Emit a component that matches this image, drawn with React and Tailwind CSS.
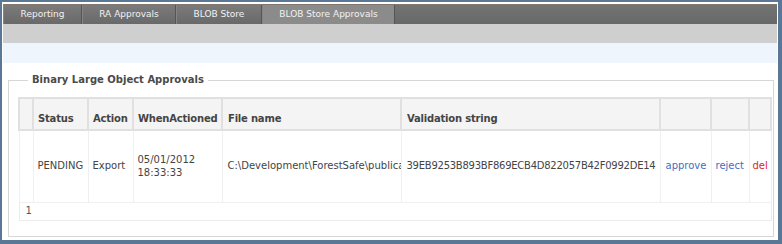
const tabs = [
  { label: "Reporting", w: "w-[79px]" },
  { label: "RA Approvals", w: "w-[94px]" },
  { label: "BLOB Store", w: "w-[86px]" },
  { label: "BLOB Store Approvals", w: "w-[133px]", active: true },
];

const rows = [
  {
    status: "PENDING",
    action: "Export",
    date: "05/01/2012",
    time: "18:33:33",
    file: "C:\\Development\\ForestSafe\\publicaccess\\blobs\\export.dat",
    hash: "39EB9253B893BF869ECB4D822057B42F0992DE14",
  },
];

export default function App() {
  return (
    <div className="w-[782px] h-[244px] overflow-hidden border-l-2 border-t-2 border-r-4 border-b-4 border-[#5a7896] bg-white font-['DejaVu_Sans',sans-serif]">
      <div className="mx-px mt-[2px]">
        {/* tab strip */}
        <div className="flex h-[20px] bg-[#6e6f6f] border-t border-[#80776f]">
          {tabs.map((t) => (
            <div
              key={t.label}
              className={`${t.w} flex items-center justify-center border-r border-[#555555] border-l border-l-[#858585] text-[9px] text-[#f2f2f2] ${
                t.active
                  ? "bg-[#8b8b8b]"
                  : "bg-gradient-to-b from-[#7b7b7b] to-[#696969]"
              }`}
            >
              {t.label}
            </div>
          ))}
          <div className="flex-1 bg-gradient-to-b from-[#727373] to-[#676868]"></div>
        </div>
        <div className="h-[19px] bg-[#cfcfcf]"></div>
        <div className="h-[20px] bg-[#eef5fd]"></div>
      </div>

      <fieldset className="ml-[6px] mr-[4px] mt-[11px] h-[163px] border border-[#d6d6d6] pl-[9px] pt-[11px]">
        <legend className="ml-[10px] px-[4px] text-[10px] leading-[12px] font-bold text-[#4a4a4a]">
          Binary Large Object Approvals
        </legend>
        <table className="w-[752px] table-fixed border-collapse text-[10px] leading-[12px] text-[#444444]">
          <colgroup>
            <col className="w-[14px]" />
            <col className="w-[55px]" />
            <col className="w-[45px]" />
            <col className="w-[89px]" />
            <col className="w-[179px]" />
            <col className="w-[259px]" />
            <col className="w-[51px]" />
            <col className="w-[38px]" />
            <col className="w-[22px]" />
          </colgroup>
          <thead>
            <tr className="h-[32px] bg-[#f4f4f4] text-left align-bottom tracking-[-0.2px]">
              <th className="border-2 border-[#e0e0e0]"></th>
              <th className="border-2 border-[#e0e0e0] pl-[4px] pb-[4px] font-bold">Status</th>
              <th className="border-2 border-[#e0e0e0] pl-[4px] pb-[4px] font-bold">Action</th>
              <th className="border-2 border-[#e0e0e0] pl-[4px] pb-[4px] font-bold">WhenActioned</th>
              <th className="border-2 border-[#e0e0e0] pl-[5px] pb-[4px] font-bold">File name</th>
              <th className="border-2 border-[#e0e0e0] pl-[5px] pb-[4px] font-bold">Validation string</th>
              <th className="border-2 border-[#e0e0e0]"></th>
              <th className="border-2 border-[#e0e0e0]"></th>
              <th className="border-2 border-[#e0e0e0]"></th>
            </tr>
          </thead>
          <tbody>
            {rows.map((r) => (
              <tr key={r.hash} className="h-[72px] align-middle">
                <td className="border border-[#f0f0f0]"></td>
                <td className="border border-[#f0f0f0] pl-[4px]">{r.status}</td>
                <td className="border border-[#f0f0f0] pl-[4px]">{r.action}</td>
                <td className="border border-[#f0f0f0] pl-[4px] leading-[13px]">
                  {r.date}
                  <br />
                  {r.time}
                </td>
                <td className="border border-[#f0f0f0] pl-[5px] overflow-hidden whitespace-nowrap">
                  {r.file}
                </td>
                <td className="border border-[#f0f0f0] pl-[5px] whitespace-nowrap overflow-hidden tracking-[-0.25px]">
                  {r.hash}
                </td>
                <td className="border border-[#f0f0f0] pl-[5px] text-[#3f6fc2]">approve</td>
                <td className="border border-[#f0f0f0] pl-[4px] text-[#3f6fc2]">reject</td>
                <td className="border border-[#f0f0f0] pl-[3px] text-[#e02525]">del</td>
              </tr>
            ))}
            <tr className="h-[18px]">
              <td colSpan={9} className="border border-[#ececec] pl-[6px] text-[#555555]">
                1
              </td>
            </tr>
          </tbody>
        </table>
      </fieldset>
    </div>
  );
}
